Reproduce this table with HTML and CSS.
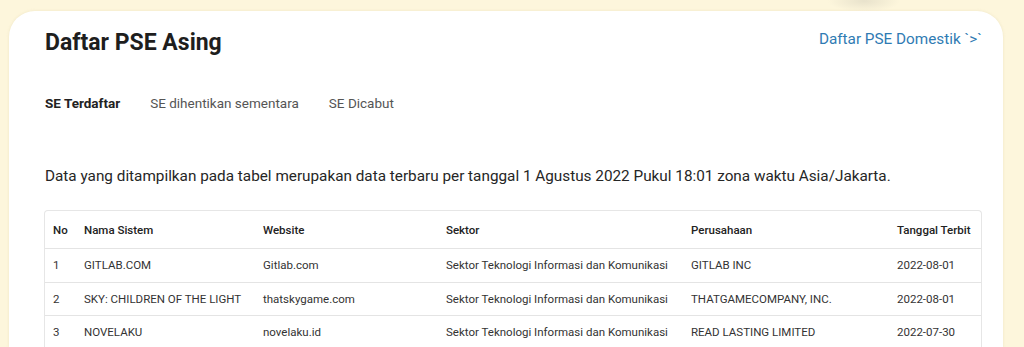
FILE: index.html
```html
<!DOCTYPE html>
<html lang="id">
<head>
<meta charset="utf-8">
<title>Daftar PSE Asing</title>
<link rel="stylesheet" href="styles.css">
</head>
<body>
<main class="card">
  <header class="head">
    <h1 class="title">Daftar PSE Asing</h1>
    <a class="domestic" href="#">Daftar PSE Domestik `&gt;`</a>
  </header>
  <nav class="tabs">
    <a class="tab active" href="#">SE Terdaftar</a>
    <a class="tab" href="#">SE dihentikan sementara</a>
    <a class="tab" href="#">SE Dicabut</a>
  </nav>
  <p class="note">Data yang ditampilkan pada tabel merupakan data terbaru per tanggal 1 Agustus 2022 Pukul 18:01 zona waktu Asia/Jakarta.</p>
  <div class="table-wrap">
    <table class="data">
      <colgroup>
        <col class="c-no"><col class="c-nama"><col class="c-web"><col class="c-sek"><col class="c-per"><col class="c-tgl">
      </colgroup>
      <thead>
        <tr><th>No</th><th>Nama Sistem</th><th>Website</th><th>Sektor</th><th>Perusahaan</th><th>Tanggal Terbit</th></tr>
      </thead>
      <tbody>
        <tr><td>1</td><td>GITLAB.COM</td><td>Gitlab.com</td><td>Sektor Teknologi Informasi dan Komunikasi</td><td>GITLAB INC</td><td>2022-08-01</td></tr>
        <tr><td>2</td><td>SKY: CHILDREN OF THE LIGHT</td><td>thatskygame.com</td><td>Sektor Teknologi Informasi dan Komunikasi</td><td>THATGAMECOMPANY, INC.</td><td>2022-08-01</td></tr>
        <tr><td>3</td><td>NOVELAKU</td><td>novelaku.id</td><td>Sektor Teknologi Informasi dan Komunikasi</td><td>READ LASTING LIMITED</td><td>2022-07-30</td></tr>
      </tbody>
    </table>
  </div>
</main>
</body>
</html>
```
FILE: styles.css
```css
html, body {
  margin: 0;
  padding: 0;
}
body {
  background:
    radial-gradient(ellipse 36px 11px at 864px 1px, rgba(215, 210, 190, 0.55), rgba(253, 246, 220, 0) 100%),
    #fdf6dc;
  font-family: Roboto, "Liberation Sans", sans-serif;
  color: #222;
  height: 347px;
  overflow: hidden;
  padding: 11px 21px 0 9px;
  box-sizing: border-box;
}
.card {
  background: #fff;
  border-radius: 26px 26px 0 0;
  height: 336px;
  overflow: hidden;
  padding: 18px 21px 0 35px;
  box-sizing: border-box;
  box-shadow: 0 0 3px rgba(230, 220, 180, 0.6);
}
.head {
  display: flex;
  justify-content: space-between;
  align-items: flex-start;
}
.title {
  margin: 0 0 0 1px;
  font-size: 23px;
  font-weight: 700;
  color: #1e1e1e;
  line-height: 28px;
}
.domestic {
  font-size: 15.3px;
  color: #2f7bb3;
  text-decoration: none;
  line-height: 18px;
  margin-top: 1px;
}
.tabs {
  display: flex;
  gap: 30px;
  margin-top: 38px;
  padding-left: 1px;
}
.tab {
  font-size: 13.5px;
  color: #555;
  text-decoration: none;
  line-height: 16px;
}
.tab.active {
  font-weight: 700;
  color: #222;
}
.note {
  margin: 55px 0 0 1px;
  font-size: 15.3px;
  line-height: 20px;
  color: #262626;
}
.table-wrap {
  margin-top: 24px;
  border: 1px solid #e6e6e6;
  border-bottom: none;
  border-radius: 4px 4px 0 0;
  overflow: hidden;
}
.data {
  width: 100%;
  border-collapse: collapse;
  table-layout: fixed;
  font-size: 11.5px;
}
.c-no { width: 31px; }
.c-nama { width: 179px; }
.c-web { width: 183px; }
.c-sek { width: 245px; }
.c-per { width: 206px; }
.data th, .data td {
  text-align: left;
  padding: 0 0 0 8px;
  white-space: nowrap;
}
.data th {
  font-weight: 500;
  color: #222;
  height: 37px;
}
.data td {
  color: #333;
  height: 32.5px;
  border-top: 1px solid #e4e4e4;
}
```
